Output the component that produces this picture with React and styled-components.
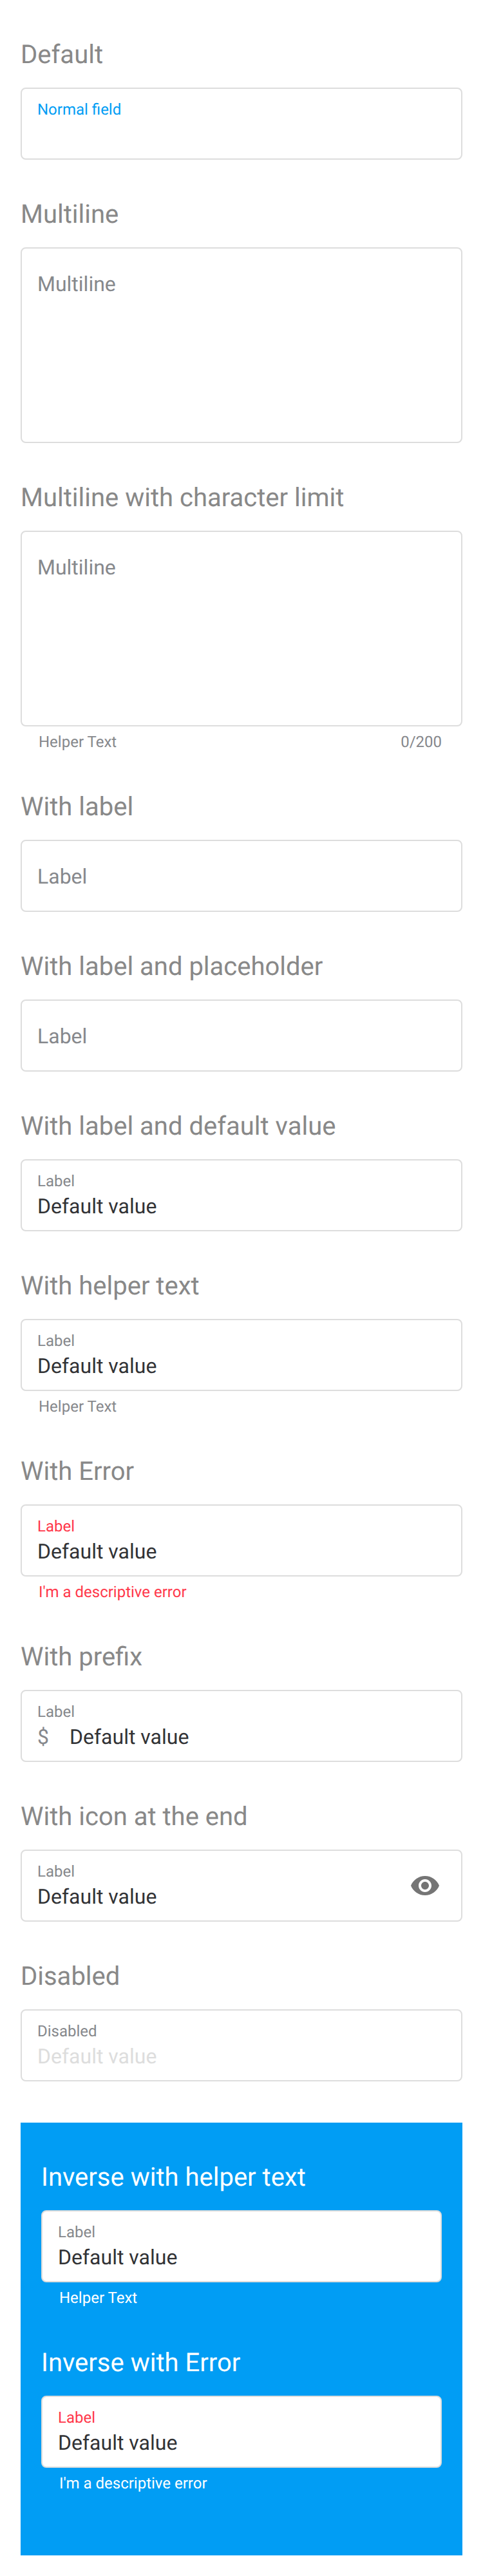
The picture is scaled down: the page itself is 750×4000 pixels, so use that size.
import React from "react";
import styled, { createGlobalStyle } from "styled-components";

const Global = createGlobalStyle`
  * { box-sizing: border-box; }
  body {
    margin: 0;
    background: #fff;
    font-family: Roboto, "Liberation Sans", sans-serif;
    font-weight: 400;
    text-rendering: geometricPrecision;
  }
`;

const Page = styled.main`
  width: 750px;
  height: 4000px;
  padding: 0 32px;
`;

const Section = styled.section`
  padding-top: 57px;
`;

const Title = styled.h2`
  margin: 0 0 24px;
  height: 55px;
  font-size: 40px;
  line-height: 56px;
  font-weight: 400;
  color: ${(p) => (p.$inverse ? "#fff" : "#888")};
`;

const Box = styled.div`
  display: flex;
  align-items: center;
  height: ${(p) => (p.$tall ? 304 : 112)}px;
  border: 2px solid #ddd;
  border-radius: 8px;
  background: #fff;
  padding: 0 32px 0 24px;
`;

const Content = styled.div`
  flex: 1;
  align-self: stretch;
  display: flex;
  flex-direction: column;
  padding-top: 14px;
`;

const labelColors = { normal: "#86888c", active: "#019df4", error: "#ff374a" };

const Label = styled.span`
  height: 35px;
  font-size: 24px;
  line-height: 36px;
  color: ${(p) => labelColors[p.$state || "normal"]};
`;

const RestLabel = styled.span`
  padding-top: 19px;
  font-size: 32px;
  line-height: 44px;
  color: #86888c;
`;

const ValueRow = styled.div`
  display: flex;
  font-size: 32px;
  line-height: 44px;
  color: ${(p) => (p.$disabled ? "#ddd" : "#313235")};
`;

const Prefix = styled.span`
  width: 50px;
  color: #86888c;
`;

const Helper = styled.div`
  display: flex;
  justify-content: space-between;
  height: 40px;
  padding: 8px 32px 0 28px;
  font-size: 24px;
  line-height: 32px;
  color: ${(p) => (p.$inverse ? "#fff" : p.$error ? "#ff374a" : "#86888c")};
`;

const InversePanel = styled.div`
  height: 672px;
  margin-top: 64px;
  padding: 0 32px;
  background: #019df4;
`;

const Icon = styled.svg`
  width: 48px;
  height: 48px;
  fill: #757575;
`;

const EyeIcon = () => (
  <Icon viewBox="0 0 24 24">
    <path d="M12 4.5C7 4.5 2.73 7.61 1 12c1.73 4.39 6 7.5 11 7.5s9.27-3.11 11-7.5c-1.73-4.39-6-7.5-11-7.5zM12 17c-2.76 0-5-2.24-5-5s2.24-5 5-5 5 2.24 5 5-2.24 5-5 5zm0-8c-1.66 0-3 1.34-3 3s1.34 3 3 3 3-1.34 3-3-1.34-3-3-3z" />
  </Icon>
);

function Field({ title, rest, label, value, state, prefix, icon, helper, counter, tall, disabled, inverse }) {
  return (
    <Section>
      <Title $inverse={inverse}>{title}</Title>
      <Box $tall={tall}>
        <Content>
          {rest && <RestLabel>{rest}</RestLabel>}
          {label && <Label $state={state}>{label}</Label>}
          {value && (
            <ValueRow $disabled={disabled}>
              {prefix && <Prefix>{prefix}</Prefix>}
              {value}
            </ValueRow>
          )}
        </Content>
        {icon && <EyeIcon />}
      </Box>
      {helper && (
        <Helper $error={state === "error"} $inverse={inverse}>
          <span>{helper}</span>
          {counter && <span>{counter}</span>}
        </Helper>
      )}
    </Section>
  );
}

export default function App() {
  return (
    <>
      <Global />
      <Page>
        <Field title="Default" label="Normal field" state="active" />
        <Field title="Multiline" rest="Multiline" tall />
        <Field title="Multiline with character limit" rest="Multiline" tall helper="Helper Text" counter="0/200" />
        <Field title="With label" rest="Label" />
        <Field title="With label and placeholder" rest="Label" />
        <Field title="With label and default value" label="Label" value="Default value" />
        <Field title="With helper text" label="Label" value="Default value" helper="Helper Text" />
        <Field title="With Error" label="Label" value="Default value" state="error" helper="I'm a descriptive error" />
        <Field title="With prefix" label="Label" value="Default value" prefix="$" />
        <Field title="With icon at the end" label="Label" value="Default value" icon />
        <Field title="Disabled" label="Disabled" value="Default value" disabled />
        <InversePanel>
          <Field title="Inverse with helper text" label="Label" value="Default value" helper="Helper Text" inverse />
          <Field title="Inverse with Error" label="Label" value="Default value" state="error" helper="I'm a descriptive error" inverse />
        </InversePanel>
      </Page>
    </>
  );
}
